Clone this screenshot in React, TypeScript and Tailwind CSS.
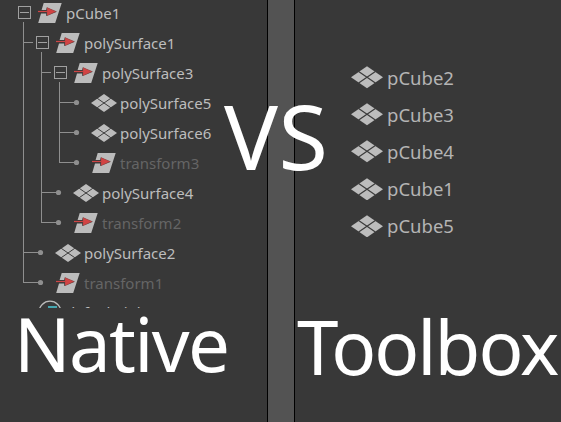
import React from "react";

type Kind = "transform" | "mesh" | "set";

interface TreeNode {
  label: string;
  depth: number;
  kind: Kind;
  open?: boolean;
  dim?: boolean;
  last?: boolean;
  // depths of ancestor guides that continue through this row
  through: number[];
}

const nodes: TreeNode[] = [
  { label: "pCube1", depth: 0, kind: "transform", open: true, through: [] },
  { label: "polySurface1", depth: 1, kind: "transform", open: true, through: [] },
  { label: "polySurface3", depth: 2, kind: "transform", open: true, through: [1] },
  { label: "polySurface5", depth: 3, kind: "mesh", through: [1, 2] },
  { label: "polySurface6", depth: 3, kind: "mesh", through: [1, 2] },
  { label: "transform3", depth: 3, kind: "transform", dim: true, last: true, through: [1, 2] },
  { label: "polySurface4", depth: 2, kind: "mesh", through: [1] },
  { label: "transform2", depth: 2, kind: "transform", dim: true, last: true, through: [1] },
  { label: "polySurface2", depth: 1, kind: "mesh", through: [] },
  { label: "transform1", depth: 1, kind: "transform", dim: true, last: true, through: [] },
  { label: "defaultLightSet", depth: 0, kind: "set", through: [] },
];

const results = ["pCube2", "pCube3", "pCube4", "pCube1", "pCube5"];

const GUIDE = "#8f8f8f";

function Guides({ node }: { node: TreeNode }) {
  const { depth, open, last, through } = node;
  const x = 18 * depth;
  const parent = x + 5;
  return (
    <svg width={x + 20} height="30" className="block shrink-0" shapeRendering="crispEdges">
      {through.map((d) => (
        <rect key={d} x={18 * d - 13} y="0" width="1" height="30" fill={GUIDE} />
      ))}
      {depth > 0 && (
        <g fill={GUIDE}>
          <rect x={parent - 18} y="0" width="1" height={last ? 15 : 30} />
          <rect x={parent - 18} y="14" width={open ? 10 : 18} height="1" />
        </g>
      )}
      {open && (
        <g>
          <rect x={x + 0.5} y="8.5" width="12" height="12" fill="none" stroke="#a0a0a0" />
          <rect x={x + 2} y="14" width="9" height="1" fill="#a0a0a0" />
          <rect x={parent} y="24" width="1" height="6" fill={GUIDE} />
        </g>
      )}
      {depth > 0 && !open && (
        <circle cx={x + 4.5} cy="14.5" r="2.6" fill={GUIDE} shapeRendering="auto" />
      )}
    </svg>
  );
}

function MeshIcon({ className }: { className: string }) {
  return (
    <svg viewBox="0 0 26 18" className={className}>
      <path d="M13 0 L26 9 L13 18 L0 9Z" fill="#bcbcbc" />
      <path d="M6.2 4.3 L19.8 13.7 M19.8 4.3 L6.2 13.7" stroke="#3c3c3c" strokeWidth="1" />
    </svg>
  );
}

function TransformIcon() {
  return (
    <svg width="24" height="20" viewBox="0 0 24 20" className="block">
      <path d="M5.7 0 H23.7 L17.2 20 H0.2 L3 10.4 H8.2 V13 L18.8 8.8 L8.8 4.4 L8.2 7 H3.6Z" fill="#bcbcbc" />
      <path d="M0 8.5 H10" stroke="#cf4545" strokeWidth="1.2" />
      <path d="M9 4.5 L18.2 8.6 L9 12.7Z" fill="#d24444" stroke="#8c4a4a" strokeWidth="0.4" />
    </svg>
  );
}

function SetIcon() {
  return (
    <svg width="24" height="24" viewBox="0 0 24 24" className="block">
      <circle cx="12" cy="12.2" r="11" fill="none" stroke="#bcbcbc" strokeWidth="1.3" />
      <rect x="10" y="6" width="9" height="5" fill="#45a6b0" />
    </svg>
  );
}

function TreeRow({ node }: { node: TreeNode }) {
  return (
    <div className="flex h-[30px]">
      <Guides node={node} />
      <div className="flex w-7 shrink-0">
        {node.kind === "mesh" && <MeshIcon className="-ml-px mt-1.5 h-[18px] w-[26px] shrink-0" />}
        {node.kind === "transform" && (
          <div className="mt-[5px]">
            <TransformIcon />
          </div>
        )}
        {node.kind === "set" && (
          <div className="mt-0.5">
            <SetIcon />
          </div>
        )}
      </div>
      <span
        className={`whitespace-nowrap text-[15px] ${node.kind === "set" ? "leading-[28px]" : "leading-[30px]"} ${node.dim ? "text-[#656565]" : "text-[#bdbdbd]"}`}
      >
        {node.label}
      </span>
    </div>
  );
}

export default function App() {
  return (
    <div className="relative flex h-[422px] w-[561px] overflow-hidden bg-[#383838] font-['Noto_Sans',sans-serif]">
      <section className="flex w-[267px] shrink-0 flex-col">
        <div className="h-[308px] overflow-hidden pl-[18px]">
          <div className="-mt-0.5">
            {nodes.map((n) => (
              <TreeRow key={n.label} node={n} />
            ))}
          </div>
        </div>
        <h2 className="-mt-[11px] whitespace-nowrap pl-[14px] text-[74.5px] leading-[92px] tracking-[-1.7px] text-white">
          Native
        </h2>
      </section>
      <div className="w-7 shrink-0 border-x border-black bg-[#535353]" />
      <section className="flex min-w-0 flex-1 flex-col">
        <ul className="flex h-[296px] flex-col pl-14 pt-[59px]">
          {results.map((r) => (
            <li key={r} className="flex h-[37.1px] shrink-0 items-center gap-1">
              <MeshIcon className="h-[22.5px] w-8 shrink-0" />
              <span className="text-[18.5px] leading-[37px] text-[#b4b4b4]">{r}</span>
            </li>
          ))}
        </ul>
        <h2 className="whitespace-nowrap pl-0.5 text-[74.5px] leading-[100px] tracking-[-2px] text-white">
          Toolbox
        </h2>
      </section>
      <div className="absolute left-[224px] top-[77px] whitespace-nowrap text-[90px] leading-[116px] tracking-[0.5px] text-white">
        VS
      </div>
    </div>
  );
}
